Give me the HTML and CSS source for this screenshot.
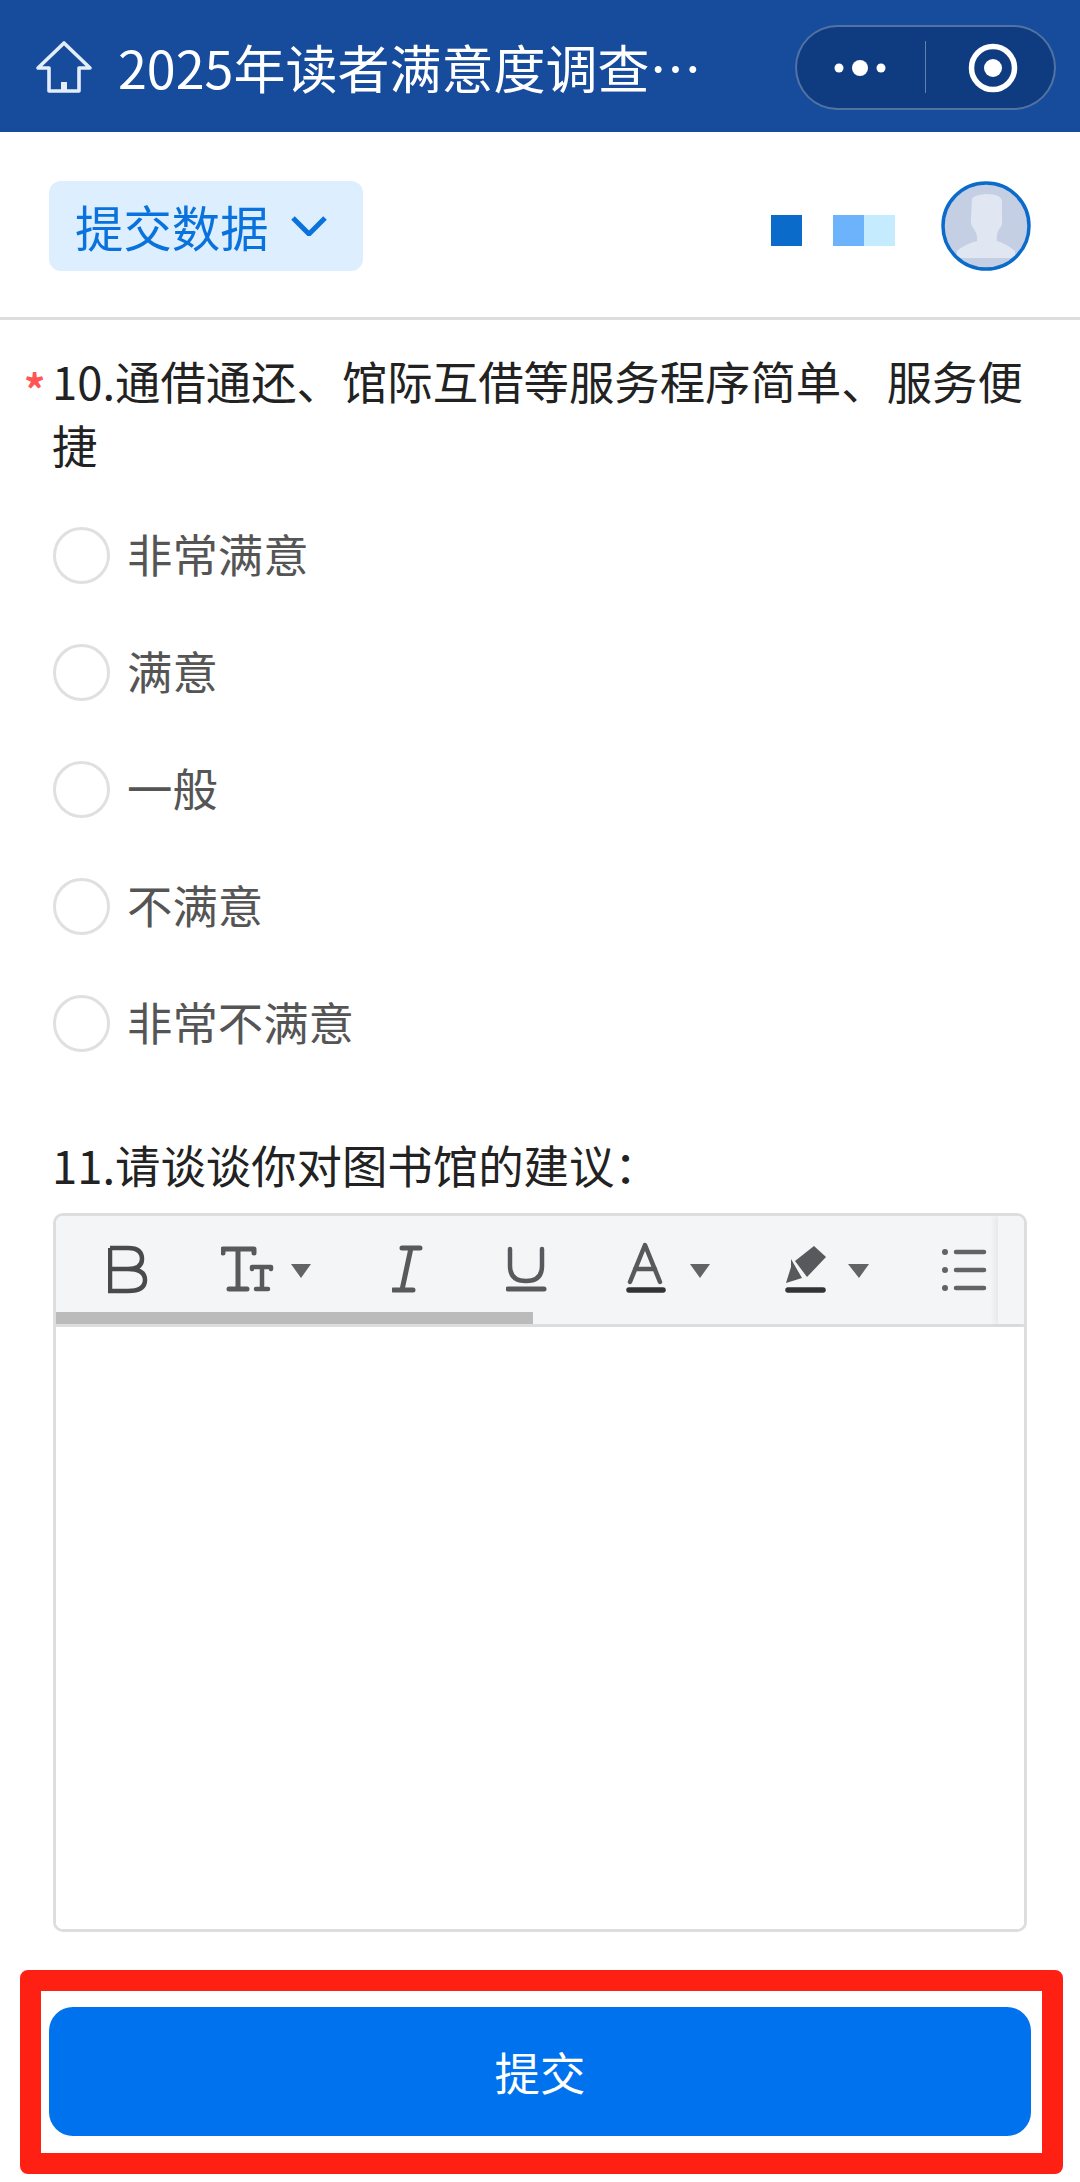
FILE: index.html
```html
<!DOCTYPE html>
<html lang="zh-CN">

<head>
    <meta charset="UTF-8">
    <meta name="viewport" content="width=device-width, initial-scale=1.0">
    <title>2025年读者满意度调查</title>
    <link rel="stylesheet" href="styles.css">
</head>

<body>
    <header class="nav-bar">
        <svg class="home-icon" width="60" height="60" viewBox="0 0 60 60">
            <path d="M32 6 L6 31 H17 V54 H47 V31 H58 Z" fill="none" stroke="#e4edf8" stroke-width="3.6" stroke-linejoin="round"/>
            <rect x="29" y="45" width="6" height="9" fill="#e4edf8"/>
        </svg>
        <h1 class="nav-title">2025年读者满意度调查…</h1>
        <div class="capsule">
            <svg class="capsule-more" width="128" height="81" viewBox="0 0 128 81">
                <circle cx="42" cy="41" r="4.5" fill="#fff"/>
                <circle cx="63" cy="41" r="8" fill="#fff"/>
                <circle cx="84" cy="41" r="4.5" fill="#fff"/>
            </svg>
            <span class="capsule-line"></span>
            <svg class="capsule-close" width="128" height="81" viewBox="0 0 128 81">
                <circle cx="67" cy="41" r="21.5" fill="none" stroke="#fff" stroke-width="5.5"/>
                <circle cx="67" cy="41" r="9" fill="#fff"/>
            </svg>
        </div>
    </header>

    <div class="top-row">
        <div class="data-chip">
            <span>提交数据</span>
            <svg width="36" height="20" viewBox="0 0 36 20">
                <path d="M2 2 L18 18 L34 2" fill="none" stroke="#0a72dc" stroke-width="5"/>
            </svg>
        </div>
        <div class="blocks">
            <span class="block block-dark"></span>
            <span class="block block-mid"></span>
            <span class="block block-light"></span>
        </div>
        <svg class="avatar" width="90" height="90" viewBox="0 0 90 90">
            <circle cx="45" cy="45" r="43" fill="#c5cfe3"/>
            <path d="M31 18 Q32 14 45 13 Q60 13 61 20 L61 38 Q62 45 58 48 Q55 54 56 60 Q66 63 74 70 L74 77 H16 L16 70 Q24 63 36 60 Q37 54 33 48 Q29 44 30 38 Z" fill="#e0e6f2"/>
            <circle cx="45" cy="45" r="43" fill="none" stroke="#0b6bcb" stroke-width="3.5"/>
        </svg>
    </div>

    <main class="form-body">
        <section class="question">
            <span class="required">*</span>
            <p class="question-title">10.通借通还、馆际互借等服务程序简单、服务便捷</p>
            <ul class="options">
                <li><span class="radio"></span><span class="option-text">非常满意</span></li>
                <li><span class="radio"></span><span class="option-text">满意</span></li>
                <li><span class="radio"></span><span class="option-text">一般</span></li>
                <li><span class="radio"></span><span class="option-text">不满意</span></li>
                <li><span class="radio"></span><span class="option-text">非常不满意</span></li>
            </ul>
        </section>

        <section class="question-editor">
            <p class="question-title">11.请谈谈你对图书馆的建议：</p>
            <div class="editor">
                <div class="toolbar">
                    <!-- bold -->
                    <svg class="tool" width="113" height="60" viewBox="0 0 113 60">
                        <path d="M2 8 H20 Q34 8 34 19 Q34 29 20 29 H2 M20 29 Q37 29 37 40 Q37 51 20 51 H2 V8" fill="none" stroke="#484a4d" stroke-width="4.5"/>
                    </svg>
                    <!-- font size -->
                    <svg class="tool" width="171" height="60" viewBox="0 0 171 60">
                        <g fill="none" stroke="#58595c" stroke-width="5" stroke-linecap="round" stroke-linejoin="round">
                            <path d="M2 13 V9 H33 V13 M17 9 V49 M8 49 H26"/>
                            <path d="M31 29 V27 H50 V29 M41 27 V49 M35 49 H47" stroke-width="4.5"/>
                        </g>
                        <path d="M70 24 H90 L80 38 Z" fill="#626366"/>
                    </svg>
                    <!-- italic -->
                    <svg class="tool" width="114" height="60" viewBox="0 0 114 60">
                        <path d="M10 8 H28 M19 8 L10 50 M1 50 H21" fill="none" stroke="#58595c" stroke-width="5" stroke-linecap="round"/>
                    </svg>
                    <!-- underline -->
                    <svg class="tool" width="120" height="60" viewBox="0 0 120 60">
                        <path d="M4 9 V26 Q4 41 20 41 Q36 41 36 26 V9" fill="none" stroke="#58595c" stroke-width="4.5" stroke-linecap="round"/>
                        <path d="M2 49 H38" stroke="#58595c" stroke-width="5" stroke-linecap="round"/>
                    </svg>
                    <!-- text color -->
                    <svg class="tool" width="159" height="60" viewBox="0 0 159 60">
                        <path d="M4 42 L19 5 L34 42 M9 29 H29" fill="none" stroke="#58595c" stroke-width="4.5" stroke-linecap="round" stroke-linejoin="round"/>
                        <path d="M3 50 H37" stroke="#333" stroke-width="5.5" stroke-linecap="round"/>
                        <path d="M64 24 H84 L74 38 Z" fill="#626366"/>
                    </svg>
                    <!-- highlight -->
                    <svg class="tool" width="157" height="60" viewBox="0 0 157 60">
                        <path d="M10 21 L29 6 L41 17 L22 37 Z" fill="#58595c"/>
                        <path d="M5 18 L5 26 L0 42 L16 37 Z" fill="#58595c" transform="translate(1 1)"/>
                        <path d="M3 50 H38" stroke="#333" stroke-width="5.5" stroke-linecap="round"/>
                        <path d="M63 24 H84 L74 38 Z" fill="#626366"/>
                    </svg>
                    <!-- list -->
                    <svg class="tool" width="46" height="60" viewBox="0 0 46 60">
                        <g fill="#626366">
                            <circle cx="3" cy="12" r="3"/>
                            <circle cx="3" cy="30" r="3"/>
                            <circle cx="3" cy="48" r="3"/>
                        </g>
                        <path d="M14 12 H42 M14 30 H42 M14 48 H42" stroke="#626366" stroke-width="4.5" stroke-linecap="round"/>
                    </svg>
                    <span class="toolbar-thumb"></span>
                    <span class="toolbar-pin"></span>
                </div>
                <div class="editor-area"></div>
            </div>
        </section>

        <div class="submit-mark">
            <button class="submit-btn">提交</button>
        </div>
    </main>
</body>

</html>
```

FILE: styles.css
```css
* {
    box-sizing: border-box;
}

body {
    margin: 0;
    padding: 0;
    width: 1080px;
    height: 2182px;
    overflow: hidden;
    background-color: #fff;
    color: #222;
    font-family: "Noto Sans CJK SC", "Noto Sans", sans-serif;
}

.nav-bar {
    display: flex;
    align-items: center;
    height: 132px;
    padding: 2px 24px 0 32px;
    background-color: #174c9c;
}

.home-icon {
    flex-shrink: 0;
}

.nav-title {
    flex: 1;
    margin: 0 0 0 26px;
    color: #fff;
    font-size: 52px;
    font-weight: 400;
    line-height: 70px;
    white-space: nowrap;
}

.capsule {
    display: flex;
    align-items: center;
    width: 261px;
    height: 85px;
    border: 2px solid rgba(255, 255, 255, 0.28);
    border-radius: 43px;
    background-color: #0f3c80;
}

.capsule-more,
.capsule-close {
    flex-shrink: 0;
}

.capsule-line {
    flex-shrink: 0;
    width: 1px;
    height: 52px;
    background-color: rgba(255, 255, 255, 0.35);
}

.top-row {
    display: flex;
    align-items: flex-start;
    height: 188px;
    padding: 49px 49px 0;
    border-bottom: 3px solid #ddd;
}

.data-chip {
    display: flex;
    align-items: center;
    gap: 22px;
    width: 314px;
    height: 90px;
    padding-left: 26px;
    border-radius: 12px;
    background-color: #ddeeff;
    color: #0a72dc;
    font-size: 48.4px;
}

.blocks {
    display: flex;
    margin: 34px 46px 0 auto;
}

.block {
    width: 31px;
    height: 31px;
}

.block-dark {
    margin-right: 31px;
    background-color: #0b6bcb;
}

.block-mid {
    background-color: #6db3fb;
}

.block-light {
    background-color: #c4ebfe;
}

.form-body {
    padding-top: 28px;
}

.question {
    position: relative;
    padding-left: 53px;
}

.required {
    position: absolute;
    top: 15px;
    left: 24px;
    color: #f55;
    font-size: 42px;
    font-weight: 700;
    line-height: 50px;
}

.question-title {
    width: 990px;
    margin: 0 0 0 -1px;
    font-size: 45.4px;
    line-height: 64px;
}

.options {
    margin: 21px 0 0;
    padding: 0;
    list-style: none;
}

.options li {
    display: flex;
    align-items: center;
    gap: 17px;
    height: 117px;
    color: #555;
    font-size: 45.4px;
}

.option-text {
    margin-top: -5px;
}

.radio {
    width: 57px;
    height: 57px;
    border: 3px solid #e0e0e0;
    border-radius: 50%;
}

.question-editor {
    margin-top: 50px;
    padding-left: 53px;
}

.editor {
    width: 974px;
    height: 719px;
    margin-top: 17px;
    border: 3px solid #ddd;
    border-radius: 10px;
    overflow: hidden;
}

.toolbar {
    position: relative;
    display: flex;
    align-items: center;
    height: 111px;
    padding-left: 52px;
    border-bottom: 3px solid #ddd;
    background-color: #f4f5f7;
}

.tool {
    flex-shrink: 0;
}

.toolbar-thumb {
    position: absolute;
    left: 0;
    bottom: 0;
    width: 477px;
    height: 12px;
    background-color: #bbb;
}

.toolbar-pin {
    position: absolute;
    top: 0;
    right: 0;
    width: 26px;
    height: 108px;
    background-color: #f4f5f7;
    box-shadow: -4px 0 5px rgba(0, 0, 0, 0.05);
}

.editor-area {
    height: 602px;
    background-color: #fff;
}

.submit-mark {
    width: 1043px;
    height: 204px;
    margin: 38px 0 0 20px;
    padding: 16px 11px 17px 8px;
    border: 21px solid #ff2014;
    border-radius: 8px;
    background-color: #fff;
}

.submit-btn {
    display: block;
    width: 100%;
    height: 100%;
    padding-bottom: 3px;
    border: 0;
    border-radius: 24px;
    background-color: #0072ed;
    color: #fff;
    font-family: inherit;
    font-size: 45.4px;
}
```
